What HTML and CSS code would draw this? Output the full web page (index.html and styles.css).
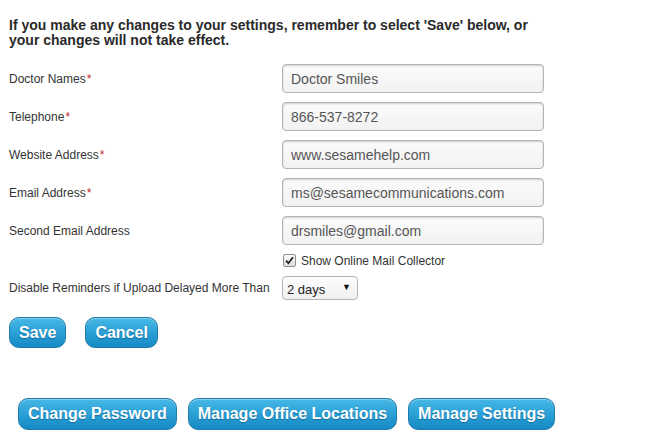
FILE: index.html
```html
<!DOCTYPE html>
<html lang="en">
<head>
    <meta charset="UTF-8">
    <title>Settings</title>
    <link rel="stylesheet" href="styles.css">
</head>
<body>
    <div class="page">
        <p class="notice">If you make any changes to your settings, remember to select 'Save' below, or your changes will not take effect.</p>

        <div class="form">
            <label for="docName">Doctor Names<span class="req">*</span></label>
            <input type="text" id="docName" value="Doctor Smiles">

            <label for="phone">Telephone<span class="req">*</span></label>
            <input type="text" id="phone" value="866-537-8272">

            <label for="website">Website Address<span class="req">*</span></label>
            <input type="text" id="website" value="www.sesamehelp.com">

            <label for="email">Email Address<span class="req">*</span></label>
            <input type="text" id="email" value="ms@sesamecommunications.com">

            <label for="email2">Second Email Address</label>
            <input type="text" id="email2" value="drsmiles@gmail.com">

            <span></span>
            <label class="check">
                <input type="checkbox" checked>
                <span class="box"><svg width="9" height="9" viewBox="0 0 9 9"><path d="M1 4.6 L3.4 7.2 L8 1.2" fill="none" stroke="#222" stroke-width="1.8"/></svg></span>
                Show Online Mail Collector
            </label>

            <label for="delay">Disable Reminders if Upload Delayed More Than</label>
            <div class="select-wrap">
                <select id="delay">
                    <option>1 day</option>
                    <option selected>2 days</option>
                    <option>3 days</option>
                </select>
                <span class="arrow">&#9660;</span>
            </div>
        </div>

        <div class="actions">
            <button class="btn">Save</button>
            <button class="btn">Cancel</button>
        </div>

        <div class="links">
            <button class="btn">Change Password</button>
            <button class="btn">Manage Office Locations</button>
            <button class="btn">Manage Settings</button>
        </div>
    </div>
</body>
</html>
```

FILE: styles.css
```css
body {
    margin: 0;
    font-family: "Liberation Sans", Arial, sans-serif;
    color: #333;
    background: #fff;
}
.page {
    padding: 18px 0 0 9px;
}
.notice {
    margin: 0;
    width: 540px;
    font-size: 14px;
    line-height: 15px;
    font-weight: bold;
    color: #2a2a2a;
}
.form {
    display: grid;
    grid-template-columns: 273px 262px;
    row-gap: 9px;
    align-items: center;
    margin-top: 16px;
}
.form label {
    font-size: 12px;
    color: #333;
}
.req {
    color: #c4262e;
    margin-left: 1px;
}
.form input[type="text"] {
    box-sizing: border-box;
    height: 29px;
    width: 262px;
    margin: 0;
    padding: 0 8px;
    font-family: inherit;
    font-size: 14px;
    color: #555;
    border: 1px solid #b4b4b4;
    border-radius: 4px;
    background: linear-gradient(#fbfbfb, #f2f2f2);
    box-shadow: inset 0 1px 2px rgba(0, 0, 0, 0.18);
}
.check {
    display: flex;
    align-items: center;
    height: 13px;
    padding-left: 1px;
}
.check input {
    display: none;
}
.box {
    box-sizing: border-box;
    width: 13px;
    height: 13px;
    margin-right: 5px;
    border: 1px solid #8f8f8f;
    border-radius: 2px;
    background: linear-gradient(#fdfdfd, #dcdcdc);
    display: flex;
    align-items: center;
    justify-content: center;
}
.select-wrap {
    position: relative;
    width: 76px;
    height: 24px;
}
.select-wrap select {
    appearance: none;
    -webkit-appearance: none;
    box-sizing: border-box;
    width: 76px;
    height: 24px;
    margin: 0;
    padding: 2px 0 0 4px;
    font-family: inherit;
    font-size: 13px;
    color: #222;
    border: 1px solid #b4b4b4;
    border-radius: 4px;
    background: linear-gradient(#fdfdfd, #f0f0f0);
}
.arrow {
    position: absolute;
    right: 7px;
    top: 6px;
    font-size: 9px;
    color: #111;
    pointer-events: none;
}
.btn {
    box-sizing: border-box;
    height: 32px;
    padding: 0 9px;
    font-family: inherit;
    font-size: 16px;
    font-weight: bold;
    color: #fff;
    text-shadow: 0 1px 1px rgba(0, 50, 90, 0.45);
    border: 1px solid #1d7aaa;
    border-radius: 10px;
    background: linear-gradient(#47b8e6, #2aa0d6 50%, #168ac4);
    box-shadow: inset 0 1px 0 rgba(255, 255, 255, 0.35);
    cursor: pointer;
}
.actions {
    display: flex;
    gap: 19px;
    margin-top: 17px;
}
.actions .btn {
    height: 31px;
}
.links {
    display: flex;
    gap: 11px;
    margin-top: 50px;
    padding-left: 9px;
}
```
